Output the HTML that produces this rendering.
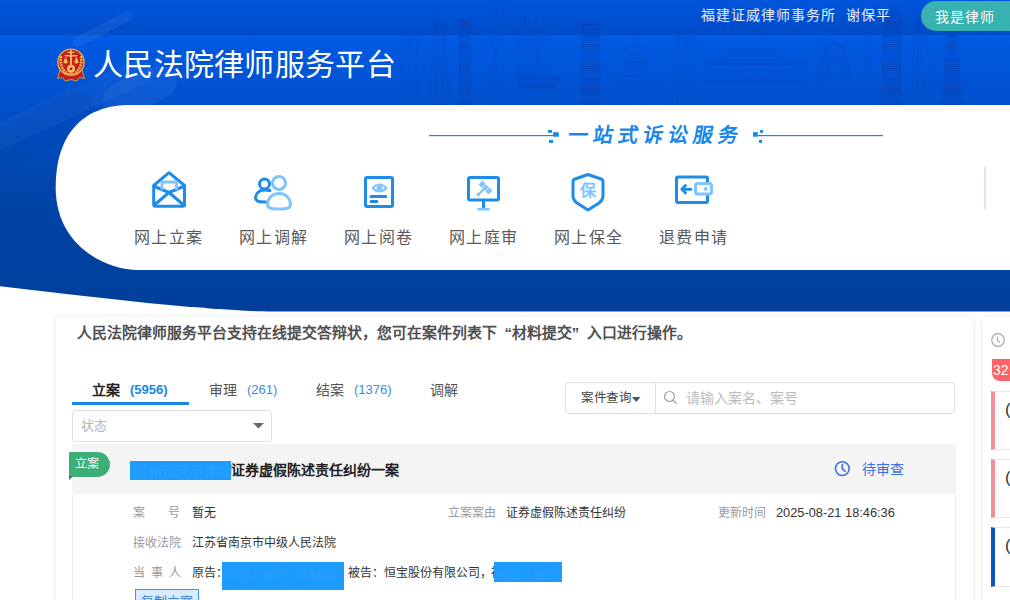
<!DOCTYPE html>
<html lang="zh-CN"><head><meta charset="utf-8">
<style>
*{margin:0;padding:0;box-sizing:border-box}
html,body{width:1010px;height:600px;overflow:hidden;background:#fff}
body{position:relative;font-family:"Liberation Sans",sans-serif;color:#333}
.abs{position:absolute}
.nw{white-space:nowrap}
#hdr{left:0;top:0;width:1010px;height:105px;background:#0057df;overflow:hidden}
#topbar{left:0;top:0;width:1010px;height:35px;background:#0050d2}
#card1{left:56px;top:105px;width:1000px;height:165px;background:#fff;border-radius:75px 0 0 75px}
.lbl{position:absolute;top:228px;font-size:16px;line-height:20px;color:#595959;white-space:nowrap;letter-spacing:1.3px;margin-left:-2px}
#main{left:56px;top:317px;width:917px;height:300px;background:#fff;border-radius:4px;box-shadow:0 0 6px rgba(0,0,0,.09)}
#side{left:983px;top:317px;width:60px;height:300px;background:#fff;border-radius:4px;box-shadow:0 0 6px rgba(0,0,0,.09)}
.t12{position:absolute;font-size:12px;line-height:16px;white-space:nowrap}
.g{color:#999}
.k{color:#333}
.tab{position:absolute;top:381px;font-size:14px;line-height:18px;color:#555;white-space:nowrap}
.tab b{font-weight:bold;color:#222}
.tab i{font-style:normal;color:#3a8ee6;margin-left:10px;font-size:13px;position:relative;top:-1px}
.redact{position:absolute;background:#1e9bff}
</style></head><body>

<svg class="abs" style="left:0;top:0" width="1010" height="320" fill="none" stroke="#0a3aa8" stroke-opacity="0.4" stroke-width="0.7">
  <defs>
    <linearGradient id="tb" x1="0" y1="0" x2="0" y2="1"><stop offset="0" stop-color="#0055dc"/><stop offset="1" stop-color="#004cc8"/></linearGradient>
    <linearGradient id="bg2" gradientUnits="userSpaceOnUse" x1="0" y1="105" x2="0" y2="312"><stop offset="0" stop-color="#0050cc"/><stop offset="0.4" stop-color="#0045aa"/><stop offset="1" stop-color="#003e9a"/></linearGradient>
    <clipPath id="hc"><path d="M0 0 H1010 V311.6 H272 C245 311.2 205 308.5 150 303.3 L75 294.9 L0 286.2 Z"/></clipPath>
    <linearGradient id="lb" x1="0" y1="0" x2="0" y2="1"><stop offset="0" stop-color="#005ae4"/><stop offset="1" stop-color="#0050cc"/></linearGradient>
  </defs>
  <rect x="0" y="0" width="1010" height="35" fill="url(#tb)" stroke="none"/>
  <rect x="0" y="35" width="1010" height="70" fill="url(#lb)" stroke="none"/>
  <path d="M0 105 H1010 V311.6 H272 C245 311.2 205 308.5 150 303.3 L75 294.9 L0 286.2 Z" fill="url(#bg2)" stroke="none"/>
  <!-- streaks -->
  <g stroke="#ffffff" stroke-linecap="round" fill="none" clip-path="url(#hc)">
    <path d="M78 42 L128 16" stroke-width="10" stroke-opacity="0.055"/>
    <path d="M-40 175 L75 110" stroke="#002a80" stroke-width="40" stroke-opacity="0.08"/>
    <path d="M-30 150 L140 72" stroke-width="26" stroke-opacity="0.035"/>
    <path d="M120 100 L160 82" stroke-width="34" stroke-opacity="0.05"/>
  </g>
  <defs>
    <pattern id="hl" width="4" height="2.2" patternUnits="userSpaceOnUse"><rect x="0" y="0" width="4" height="0.6" fill="#0a3aa8" fill-opacity="0.35"/></pattern>
    <pattern id="ms" width="3.5" height="3.5" patternUnits="userSpaceOnUse"><path d="M0 0 L3.5 3.5 M3.5 0 L0 3.5" stroke="#0a3aa8" stroke-opacity="0.35" stroke-width="0.5"/></pattern>
    <pattern id="gr" width="3" height="3" patternUnits="userSpaceOnUse"><path d="M0 0 H3 M0 0 V3" stroke="#0a3aa8" stroke-opacity="0.3" stroke-width="0.5"/></pattern>
  </defs>
  <!-- tower A -->
  <path d="M401.5 105 V34 H417 V105 M401.5 40 H417 M401.5 53 H417 M401.5 80 H417 M409 34 V105"/>
  <!-- Jin Mao -->
  <path d="M429.5 105 L433 30 L436 22 L438.5 17 L441.5 22 L444.5 30 L449.5 105 Z" fill="url(#gr)"/>
  <path d="M439 17 V10 M436 22 V105 M443 22 V105"/>
  <!-- SWFC -->
  <path d="M459.5 105 V18.5 L473 25 V33 L470 33 V105 Z" fill="url(#hl)"/>
  <!-- Pearl tower -->
  <path d="M496 2 V38 M492 105 L494 92 M500 105 L498 92 M494.5 50 V81 M497.5 50 V81 M494.5 55 H497.5 M494.5 62 H497.5 M494.5 69 H497.5 M494.5 76 H497.5"/>
  <circle cx="496" cy="44.7" r="5.5" fill="url(#gr)"/>
  <ellipse cx="496" cy="86.5" rx="7" ry="5" fill="url(#gr)"/>
  <!-- twin spires + boat -->
  <path d="M525 16.6 L523 32 L518 45 V76 H537 V45 L531 32 L529 18 Z" fill="url(#gr)"/>
  <path d="M516 77 H560 L554 88 H522 Z M547 105 V90 M535 105 V90" fill="url(#hl)"/>
  <path d="M544 16 V35 L540 45 V76 M544 35 L549 45 V76"/>
  <!-- banded tower -->
  <path d="M581 105 L582.5 24 H599 L600.5 105 Z" fill="url(#hl)"/>
  <!-- temple of heaven -->
  <path d="M637 39 V43 M631 48 Q637 42 643 48 Z M628 55 Q637 47 646 55 Z M626 62 Q637 54 648 62 Z M628 62 V71 M646 62 V71 M632 62 V71 M637 62 V71 M642 62 V71 M624 71 H650 L666 81 H611 Z M637 71 V81 M618 76 H659"/>
  <!-- tower 8 -->
  <path d="M678 105 V32 H694 V105 M678 38 H694 M678 52 H694 M678 78 H694 M686 32 V105"/>
  <!-- tiananmen -->
  <path d="M705 81 V64 H806 V81 Z M705 81 H806"/>
  <path d="M706 64 V61 H709 V64 M712 64 V61 H715 V64 M718 64 V61 H721 V64 M724 64 V61 H727 V64 M784 64 V61 H787 V64 M790 64 V61 H793 V64 M796 64 V61 H799 V64 M802 64 V61 H805 V64"/>
  <path d="M722 52 H783 L786 56 H719 Z M726 56 V60 M779 56 V60 M718 60 H787 L791 64 H714 Z M730 52 V49 H775 V52" fill="url(#gr)"/>
  <path d="M721 72 H744 M761 72 H784 M738 81 V77 Q739.5 75 741 77 V81 M746 81 V77 Q747.5 75 749 77 V81 M753 81 V76 Q755.5 74 758 76 V81 M762 81 V77 Q763.5 75 765 77 V81 M770 81 V77 Q771.5 75 773 77 V81"/>
  <!-- CCTV -->
  <path d="M816 81 L828 41 L844 46 L852 81 H844 L838 60 L830 64 L828 81 Z" fill="url(#ms)"/>
  <!-- TV tower -->
  <path d="M866.6 21 V38 M862 41 H871 L869.5 45 H863.5 Z M865 45 L864 81 M868 45 L869 81"/>
  <!-- tower 11 -->
  <path d="M882.5 105 V8 L900.5 7 V105 Z" fill="url(#hl)"/>
  <!-- twisted -->
  <path d="M912 105 Q912 40 920 13 Q930 40 930.5 105 M916 105 Q918 50 920 13 M926 105 Q922 50 920 13"/>
  <!-- tapered -->
  <path d="M942 105 L948 31 H956 L962 105 Z" fill="url(#hl)"/>
  <path d="M952 31 V105"/>
</svg>

<svg class="abs" style="left:56px;top:47px" width="30" height="36">
  <path d="M4 23 L1.5 31.5 L6.5 30.5 L9 33.8 L15 32.6 L21 33.8 L23.5 30.5 L28.5 31.5 L26 23 Z" fill="#c41d1d" stroke="#dca540" stroke-width="0.9"/>
  <circle cx="15" cy="15.2" r="13.8" fill="#e2ac45"/>
  <circle cx="15" cy="15.2" r="12.4" fill="#c81e1e"/>
  <g stroke="#e8b64e" fill="none" stroke-width="2.6" stroke-dasharray="2 0.8">
    <path d="M5 9 Q3.2 20 10.5 26"/>
    <path d="M25 9 Q26.8 20 19.5 26"/>
  </g>
  <g fill="#f2c25c">
    <rect x="14.1" y="3.2" width="1.8" height="17"/>
    <path d="M8.5 8 H21.5 L20.5 9.6 H9.5 Z"/>
    <path d="M11.5 4.8 H18.5 V6 H11.5 Z"/>
    <path d="M7.3 15.8 L9.6 9.6 L11.9 15.8 Q9.6 17.2 7.3 15.8 Z"/>
    <path d="M18.1 15.8 L20.4 9.6 L22.7 15.8 Q20.4 17.2 18.1 15.8 Z"/>
    <circle cx="15" cy="21.8" r="4"/>
  </g>
  <circle cx="15" cy="21.8" r="1.5" fill="#c81e1e"/>
  <path d="M8.5 26.8 H21.5" stroke="#e2ac45" stroke-width="1.6"/>
</svg>

<div class="abs nw" style="left:701px;top:5px;font-size:14px;line-height:20px;letter-spacing:1px;color:#e6eeff">福建证威律师事务所</div>
<div class="abs nw" style="left:846px;top:5px;font-size:14px;line-height:20px;letter-spacing:1px;color:#e6eeff">谢保平</div>
<div class="abs" style="left:921px;top:1px;width:110px;height:30px;border-radius:15px;background:#38b2b0"></div>
<div class="abs nw" style="left:935px;top:7px;font-size:14px;line-height:20px;letter-spacing:1.1px;color:#fff">我是律师</div>

<div class="abs nw" style="left:93px;top:47px;font-size:30px;line-height:36px;letter-spacing:0.3px;color:#fff;font-weight:500">人民法院律师服务平台</div>


<svg class="abs" style="left:0;top:0" width="1010" height="280"><path d="M128.4 105 H1010 V270 H137.2 C109.2 270 55.7 248.2 55.7 187.5 C55.7 123.1 94.7 105 128.4 105 Z" fill="#fff"/></svg>

<!-- slogan -->
<svg class="abs" style="left:420px;top:120px" width="480" height="30">
  <g fill="#1a88e8">
    <rect x="9" y="15" width="124" height="1.2"/>
    <rect x="133" y="12.2" width="5.7" height="4.5"/>
    <rect x="128" y="10" width="4" height="2.8"/>
    <rect x="129" y="20" width="4" height="2.9"/>
    <rect x="338" y="15" width="125" height="1.2"/>
    <rect x="333" y="12.2" width="4.8" height="4.5"/>
    <rect x="340" y="10" width="3" height="2.8"/>
    <rect x="339" y="20" width="3" height="2.9"/>
  </g>
</svg>
<div class="abs nw" style="left:566px;top:122px;font-size:20px;line-height:26px;color:#1a88e8;font-weight:900;letter-spacing:5px;transform:skewX(-10deg);transform-origin:0 100%">一站式诉讼服务</div>

<!-- services -->
<div class="lbl" style="left:136px">网上立案</div>
<div class="lbl" style="left:241px">网上调解</div>
<div class="lbl" style="left:346px">网上阅卷</div>
<div class="lbl" style="left:451px">网上庭审</div>
<div class="lbl" style="left:556px">网上保全</div>
<div class="lbl" style="left:661px">退费申请</div>
<div class="abs" style="left:984px;top:167px;width:2px;height:42px;background:#e2e2f0"></div>

<svg class="abs" style="left:0;top:0" width="1010" height="300" fill="none" stroke-linecap="round" stroke-linejoin="round">
  <!-- envelope -->
  <g stroke="#1e8ce8" stroke-width="3">
    <path d="M153.7 185.5 L169 172.7 L184.5 185.5 V204.5 Q184.5 206.2 182.8 206.2 H155.4 Q153.7 206.2 153.7 204.5 Z"/>
    <path d="M154.5 186.5 L169 192.5 L183.5 186.5 M155 204.5 L169 192.5 L183 204.5"/>
  </g>
  <path d="M162 190 V182 H176.5 V190" stroke="#7fc4ff" stroke-width="2.8" stroke-linecap="butt"/>
  <!-- people -->
  <circle cx="264.5" cy="184" r="5" stroke="#1e8ce8" stroke-width="3"/>
  <path d="M270 190.5 Q266 190 264.5 190 C258 190 255.5 195 255.5 198 C255.5 201.5 259 202 264 202 H266" stroke="#1e8ce8" stroke-width="3"/>
  <circle cx="279" cy="183" r="6.5" stroke="#7fc4ff" stroke-width="3"/>
  <path d="M279 193.5 C271 193.5 267.5 200 267.5 204 C267.5 208.5 271 209 279 209 C287 209 290.5 208.5 290.5 204 C290.5 200 287 193.5 279 193.5 Z" stroke="#7fc4ff" stroke-width="3"/>
  <!-- doc -->
  <rect x="365.5" y="177.5" width="27" height="29" rx="1.5" stroke="#1e8ce8" stroke-width="3"/>
  <path d="M372.5 188 Q379.5 181 386.5 188 Q379.5 195 372.5 188 Z" stroke="#7fc4ff" stroke-width="2"/>
  <circle cx="379.5" cy="188" r="3" fill="#7fc4ff" stroke="none"/>
  <path d="M371 196.5 H385.8 M371 201.5 H377" stroke="#1e8ce8" stroke-width="3"/>
  <!-- monitor -->
  <rect x="468.5" y="177.5" width="30" height="22.5" rx="1.5" stroke="#1e8ce8" stroke-width="3"/>
  <path d="M483.5 201 V207" stroke="#1e8ce8" stroke-width="3"/>
  <path d="M478.5 209.3 H488.5" stroke="#7fc4ff" stroke-width="2.6"/>
  <g fill="#7fc4ff" stroke="none" transform="rotate(45 485.5 187.5) translate(485.5 187.5) scale(0.88)">
    <rect x="-8" y="-3.2" width="5" height="6.4" rx="0.8"/>
    <rect x="-2.4" y="-2.8" width="4.8" height="5.6"/>
    <rect x="3" y="-3.2" width="5" height="6.4" rx="0.8"/>
    <rect x="-1.3" y="2.5" width="2.6" height="9"/>
    <rect x="-2" y="10" width="4" height="3.2" rx="1.2"/>
  </g>
  <!-- shield -->
  <path d="M588 174.5 L601 179 Q603 179.7 603 181.7 V196 Q603 200 599 203 L588 210 L577 203 Q573 200 573 196 V181.7 Q573 179.7 575 179 Z" stroke="#1e8ce8" stroke-width="3"/>
  <!-- wallet -->
  <path d="M707.5 183 V178.5 Q707.5 177 706 177 H678 Q676.5 177 676.5 178.5 V201 Q676.5 202.5 678 202.5 H706 Q707.5 202.5 707.5 201 V196" stroke="#1e8ce8" stroke-width="3"/>
  <rect x="695.5" y="183.5" width="16" height="10.5" rx="2" stroke="#7fc4ff" stroke-width="3"/>
  <circle cx="705.8" cy="189" r="1.9" fill="#7fc4ff" stroke="none"/>
  <path d="M682.5 189.3 H691 M685.5 185.5 L681.8 189.3 L685.5 193" stroke="#1e8ce8" stroke-width="2.8"/>
</svg>
<div class="abs nw" style="left:580px;top:181px;font-size:16px;line-height:20px;color:#7fc4ff;font-weight:bold">保</div>

<!-- main card -->
<div id="main" class="abs"></div>
<div class="abs nw" style="left:77px;top:323px;font-size:14.85px;line-height:20px;color:#505050;font-weight:bold">人民法院律师服务平台支持在线提交答辩状，您可在案件列表下<span style="display:inline-block;width:14.85px;text-align:right">“</span>材料提交<span style="display:inline-block;width:14.85px;text-align:left">”</span>入口进行操作。</div>

<div class="tab" style="left:92px"><b>立案</b><i style="font-weight:bold;color:#1a88e8">(5956)</i></div>
<div class="tab" style="left:209px">审理<i>(261)</i></div>
<div class="tab" style="left:316px">结案<i>(1376)</i></div>
<div class="tab" style="left:430px">调解</div>
<div class="abs" style="left:72px;top:402px;width:117px;height:3px;background:#1a88e8"></div>

<div class="abs" style="left:72px;top:410px;width:200px;height:32px;border:1px solid #dcdfe6;border-radius:4px"></div>
<div class="abs nw" style="left:81px;top:418px;font-size:13px;line-height:16px;color:#b8b8b8">状态</div>
<svg class="abs" style="left:253px;top:423px" width="11" height="6"><path d="M0 0 H11 L5.5 5.5 Z" fill="#666"/></svg>

<div class="abs" style="left:565px;top:382px;width:390px;height:32px;border:1px solid #dcdfe6;border-radius:4px"></div>
<div class="abs" style="left:655px;top:383px;width:1px;height:30px;background:#dcdfe6"></div>
<div class="abs nw" style="left:581px;top:390px;font-size:12.5px;line-height:16px;color:#444;letter-spacing:-0.4px">案件查询</div>
<svg class="abs" style="left:632px;top:397px" width="9" height="6"><path d="M0 0 H8.5 L4.25 5 Z" fill="#4a5568"/></svg>
<svg class="abs" style="left:663px;top:390px" width="16" height="16" fill="none" stroke="#a0a0a0" stroke-width="1.2"><circle cx="6.5" cy="6.5" r="5"/><path d="M10 10 L13.5 13.5"/></svg>
<div class="abs nw" style="left:686px;top:389px;font-size:14px;line-height:18px;color:#bbb">请输入案名、案号</div>

<!-- case item -->
<div class="abs" style="left:72px;top:444px;width:884px;height:200px;border:1px solid #ebebeb;border-top:none"></div>
<div class="abs" style="left:72px;top:444px;width:884px;height:50px;background:#f4f4f4"></div>
<div class="abs" style="left:69px;top:452px;width:41px;height:25px;background:#3dae78;border-radius:0 12.5px 12.5px 0"></div>
<div class="abs" style="left:69px;top:476px;width:0;height:0;border-left:4px solid #2a7d55;border-bottom:4px solid transparent"></div>
<div class="abs nw" style="left:75px;top:456px;font-size:12px;line-height:16px;color:#fff;letter-spacing:-0.3px">立案</div>
<div class="redact" style="left:130px;top:461px;width:101px;height:19px"></div>
<div class="abs nw" style="left:134px;top:462px;font-size:14px;line-height:18px;font-weight:bold;color:#26a0fc">苏州市天平律师</div>
<div class="abs nw" style="left:231px;top:461px;font-size:14px;line-height:18px;color:#222;font-weight:bold">证券虚假陈述责任纠纷一案</div>
<svg class="abs" style="left:834px;top:460px" width="17" height="17" fill="none" stroke="#3b6fe0" stroke-width="1.6" stroke-linecap="round"><circle cx="8.3" cy="8.6" r="6.9"/><path d="M8.3 4.5 V8.8 L11 11.2"/></svg>
<div class="abs nw" style="left:862px;top:460px;font-size:14px;line-height:18px;color:#3b6fe0">待审查</div>

<div class="t12 g" style="left:133px;top:504.5px">案</div>
<div class="t12 g" style="left:168px;top:504.5px">号</div>
<div class="t12 k" style="left:192px;top:504.5px">暂无</div>
<div class="t12 g" style="left:448px;top:504.5px">立案案由</div>
<div class="t12 k" style="left:506px;top:504.5px">证券虚假陈述责任纠纷</div>
<div class="t12 g" style="left:718px;top:504.5px">更新时间</div>
<div class="t12 k" style="left:776px;top:504.5px;font-size:12.8px">2025-08-21 18:46:36</div>

<div class="t12 g" style="left:133px;top:534.5px">接收法院</div>
<div class="t12 k" style="left:192px;top:534.5px">江苏省南京市中级人民法院</div>

<div class="t12 g" style="left:133px;top:564.5px;letter-spacing:6px">当事人</div>
<div class="t12 k" style="left:192px;top:564.5px">原告：</div>
<div class="redact" style="left:222px;top:562px;width:122px;height:28px"></div>
<div class="abs nw" style="left:226px;top:566.5px;font-size:12px;line-height:16px;color:#28a0fc">苏海、被告：陈妹妹、</div>
<div class="t12 k" style="left:348px;top:564.5px">被告：恒宝股份有限公司，</div>
<div class="t12 k" style="left:491px;top:564.5px">被告</div>
<div class="redact" style="left:494px;top:562px;width:68px;height:20px"></div>
<div class="abs nw" style="left:497px;top:566.5px;font-size:12px;line-height:16px;color:#28a0fc">被告：被告</div>

<div class="abs" style="left:135px;top:589px;width:64px;height:24px;border:1px solid #2f9bf3;background:#d9ecff"></div>
<div class="abs nw" style="left:141px;top:594px;font-size:13px;line-height:16px;color:#2f7fd0">复制立案</div>

<!-- side -->
<div id="side" class="abs"></div>
<svg class="abs" style="left:990px;top:332px" width="16" height="16" fill="none" stroke="#aaa" stroke-width="1.2"><circle cx="8" cy="8" r="6.3"/><path d="M7.5 4.5 V8.5 L10 10.5"/></svg>
<div class="abs" style="left:992px;top:359px;width:40px;height:22px;background:#ff6464;border-radius:0 0 0 8px"></div>
<div class="abs nw" style="left:993px;top:361px;font-size:14px;line-height:18px;color:#fff">32号</div>
<div class="abs" style="left:991px;top:391px;width:40px;height:59px;border:1px solid #e8e8e8;border-left:4px solid #f2909a"></div>
<div class="abs" style="left:991px;top:459px;width:40px;height:59px;border:1px solid #e8e8e8;border-left:4px solid #f2909a"></div>
<div class="abs" style="left:991px;top:527px;width:40px;height:60px;border:1px solid #e8e8e8;border-left:4px solid #0a55c0"></div>
<div class="abs nw" style="left:1005px;top:399px;font-size:17px;line-height:22px;color:#333">(</div>
<div class="abs nw" style="left:1005px;top:467px;font-size:17px;line-height:22px;color:#333">(</div>
<div class="abs nw" style="left:1005px;top:535px;font-size:17px;line-height:22px;color:#333">(</div>
</body></html>
